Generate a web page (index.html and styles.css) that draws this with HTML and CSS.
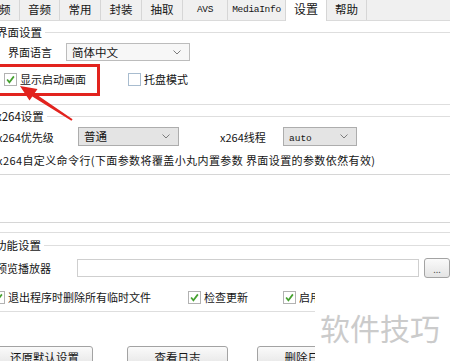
FILE: index.html
```html
<!DOCTYPE html>
<html lang="zh-CN">
<head>
  <meta charset="UTF-8" />
  <meta name="viewport" content="width=device-width, initial-scale=1" />
  <title>设置</title>
  <link rel="stylesheet" href="styles.css">
</head>
<body>
  <nav class="tabs">
    <span class="tab tab-first">视频</span>
    <span class="tab">音频</span>
    <span class="tab tab-w41">常用</span>
    <span class="tab tab-w41">封装</span>
    <span class="tab tab-w41">抽取</span>
    <span class="tab tab-latin tab-avs">AVS</span>
    <span class="tab tab-latin tab-info">MediaInfo</span>
    <span class="tab tab-active">设置</span>
    <span class="tab">帮助</span>
  </nav>

  <main class="panel">
    <div class="group-title"><span>界面设置</span></div>
    <div class="row row-lang">
      <span class="label label-lang">界面语言</span>
      <div class="select select-lang">简体中文<svg class="chev" viewBox="0 0 8 5"><path d="M0.5 0.5 L4 4 L7.5 0.5" /></svg></div>
    </div>
    <div class="row row-startup">
      <label class="check-item item-startup"><span class="check on"><svg viewBox="0 0 13 13"><path d="M2.5 6.5 L5.2 9.8 L10.5 2.8" /></svg></span>显示启动画面</label>
      <label class="check-item"><span class="check"></span>托盘模式</label>
    </div>
    <div class="group-end"></div>

    <div class="group-title title-x264"><span>x264设置</span></div>
    <div class="row row-x264">
      <span class="label label-prio">x264优先级</span>
      <div class="select select-gray select-prio">普通<svg class="chev" viewBox="0 0 8 5"><path d="M0.5 0.5 L4 4 L7.5 0.5" /></svg></div>
      <span class="label label-thread">x264线程</span>
      <div class="select select-gray select-thread"><span class="mono">auto</span><svg class="chev" viewBox="0 0 8 5"><path d="M0.5 0.5 L4 4 L7.5 0.5" /></svg></div>
    </div>
    <div class="row row-cmd">x264自定义命令行(下面参数将覆盖小丸内置参数 界面设置的参数依然有效)</div>
    <div class="cmd-box"></div>
    <div class="group-end end-x264"></div>

    <div class="group-title title-func"><span>功能设置</span></div>
    <div class="row row-player">
      <span class="label label-player">预览播放器</span>
      <div class="text-input"></div>
      <button class="btn btn-browse">...</button>
    </div>
    <div class="row row-checks">
      <label class="check-item item-temp"><span class="check on"><svg viewBox="0 0 13 13"><path d="M2.5 6.5 L5.2 9.8 L10.5 2.8" /></svg></span>退出程序时删除所有临时文件</label>
      <label class="check-item item-update"><span class="check on"><svg viewBox="0 0 13 13"><path d="M2.5 6.5 L5.2 9.8 L10.5 2.8" /></svg></span>检查更新</label>
      <label class="check-item"><span class="check on"><svg viewBox="0 0 13 13"><path d="M2.5 6.5 L5.2 9.8 L10.5 2.8" /></svg></span>启用高级设置</label>
    </div>
    <div class="group-end end-func"></div>

    <div class="row row-buttons">
      <button class="btn btn-reset">还原默认设置</button>
      <button class="btn btn-log">查看日志</button>
      <button class="btn btn-del">删除日志</button>
    </div>
  </main>

  <!-- annotation layer -->
  <div class="highlight"></div>
  <svg class="arrow" viewBox="0 0 450 361">
    <polygon points="20,86 37.5,89 34.6,93.2 72.6,119.2 71.4,120.8 32.3,96.5 29.5,100.5" />
  </svg>
  <div class="watermark">软件技巧</div>
</body>
</html>
```

FILE: styles.css
```css
body {
  margin: 0;
  width: 450px;
  height: 361px;
  overflow: hidden;
  position: relative;
  background: #fff;
  color: #151515;
  font-family: 'Noto Sans CJK SC', sans-serif;
  font-size: 11px;
}

/* tab strip */
.tabs {
  display: flex;
  height: 20px;
  background: #f0f0f0;
  border-bottom: 1px solid #dadada;
  white-space: nowrap;
}
.tab {
  box-sizing: border-box;
  width: 40px;
  height: 20px;
  line-height: 19px;
  text-align: center;
  border-right: 1px solid #d6d6d6;
  font-size: 11.5px;
  flex-shrink: 0;
}
.tab-first {
  width: 41px;
  margin-left: -21px;
}
.tab-w41 { width: 41px; }
.tab-latin {
  font-family: 'Liberation Mono', monospace;
  font-size: 9.5px;
  letter-spacing: -0.3px;
}
.tab-avs { width: 45px; }
.tab-info { width: 58px; }
.tab-active {
  width: 42px;
  height: 21px;
  margin-top: 0;
  background: #fff;
  border-left: 1px solid #d6d6d6;
  margin-left: -1px;
  line-height: 18px;
  font-size: 12px;
}

/* panel */
.panel {
  display: flex;
  flex-direction: column;
}
.row {
  display: flex;
  align-items: center;
  white-space: nowrap;
}
.group-title {
  display: flex;
  align-items: center;
  height: 22px;
  margin-left: -4px;
  font-size: 11.5px;
}
.group-title::after {
  content: '';
  flex: 1;
  height: 1px;
  margin-left: 3px;
  background: #dedede;
}
.group-end {
  height: 1px;
  background: #dedede;
  margin-top: 7px;
}

.select {
  box-sizing: border-box;
  position: relative;
  height: 18px;
  line-height: 16px;
  padding-left: 5px;
  border: 1px solid #bcbcbc;
  background: #f7f7f7;
  font-size: 11.5px;
}
.select-gray {
  background: #e4e4e4;
  border-color: #adadad;
}
.chev {
  position: absolute;
  right: 8px;
  top: 6px;
  width: 8px;
  height: 5px;
  fill: none;
  stroke: #7c7c7c;
  stroke-width: 1;
}
.mono {
  font-family: 'Liberation Mono', monospace;
  font-size: 9.5px;
}

.row-lang {
  height: 18px;
  padding-left: 8px;
}
.label-lang { width: 58px; }
.select-lang { width: 124px; }

.row-startup {
  height: 36px;
  padding-left: 4px;
}
.check-item {
  display: flex;
  align-items: center;
  gap: 3px;
}
.item-startup { width: 124px; }
.check {
  box-sizing: border-box;
  width: 13px;
  height: 13px;
  border: 1px solid #a8bccf;
  background: #fff;
  flex-shrink: 0;
}
.check.on { border-color: #b2b2b2; }
.check svg {
  display: block;
  width: 11px;
  height: 11px;
  fill: none;
  stroke: #45a12f;
  stroke-width: 2;
}

.title-x264 { height: 22px; }
.row-x264 { height: 19px; }
.label-prio {
  width: 81px;
  margin-left: -3px;
}
.select-prio { width: 101px; height: 19px; }
.label-thread {
  width: 63px;
  margin-left: 41px;
}
.select-thread { width: 74px; height: 19px; }

.row-cmd {
  height: 28px;
  margin-left: -3px;
  letter-spacing: 0.4px;
}
.cmd-box {
  height: 47px;
  border-top: 1px solid #d6d6d6;
  border-bottom: 1px solid #d6d6d6;
}
.end-x264 { margin-top: 9px; }

.title-func { height: 24px; margin-left: -5px; }
.row-player {
  height: 20px;
  margin-top: 1px;
}
.label-player {
  width: 82px;
  margin-left: -4px;
}
.text-input {
  box-sizing: border-box;
  width: 345px;
  height: 18px;
  border: 1px solid #cfcfcf;
}

.btn {
  box-sizing: border-box;
  height: 22px;
  border: 1px solid #a3a3a3;
  border-radius: 3px;
  background: linear-gradient(#fafafa, #e4e4e4);
  font-family: inherit;
  font-size: 11.5px;
  color: #151515;
  padding: 0;
}
.btn-browse {
  width: 26px;
  height: 20px;
  margin-left: 5px;
  line-height: 22px;
  font-size: 9px;
  color: #555;
}

.row-checks {
  height: 22px;
  margin-top: 8px;
  margin-left: -8px;
}
.item-temp { width: 196px; }
.item-update { width: 95px; }
.end-func { margin-top: 3px; }

.row-buttons {
  margin-top: 34px;
  align-items: flex-start;
}
.btn-reset { width: 97px; margin-left: -4px; }
.btn-log { width: 101px; margin-left: 34px; }
.btn-del { width: 101px; margin-left: 29px; }

/* annotations over the screenshot */
.highlight {
  position: absolute;
  left: -3px;
  top: 64px;
  width: 103px;
  height: 32px;
  box-sizing: border-box;
  border: 3px solid #e2231e;
}
.arrow {
  position: absolute;
  left: 0;
  top: 0;
  width: 450px;
  height: 361px;
  fill: #e2231e;
  pointer-events: none;
}
.watermark {
  position: absolute;
  left: 315px;
  top: 292px;
  width: 135px;
  height: 69px;
  background: #fff;
  color: #cbcbcb;
  font-size: 30px;
  line-height: 70px;
  padding-left: 5px;
  box-sizing: border-box;
  letter-spacing: 0;
}
```
